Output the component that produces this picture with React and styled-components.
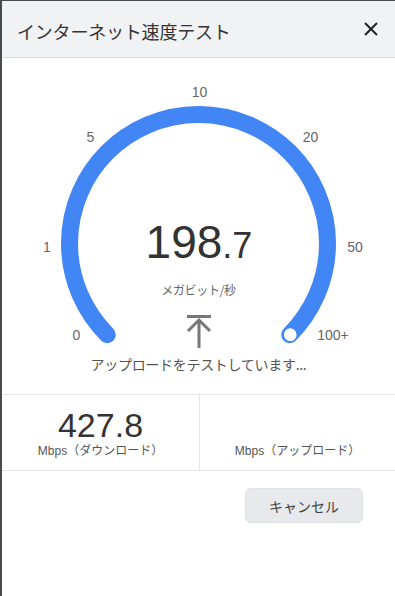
import React from "react";
import styled, { createGlobalStyle } from "styled-components";

const Global = createGlobalStyle`
  html, body { margin: 0; padding: 0; background: #fff; }
  body { font-family: "Liberation Sans", "Noto Sans CJK JP", sans-serif; }
  * { box-sizing: border-box; }
`;

const Dialog = styled.div`
  width: 395px;
  height: 596px;
  border-left: 2px solid #4a4a4a;
  border-top: 1px solid #4a4a4a;
  background: #fff;
  display: flex;
  flex-direction: column;
  overflow: hidden;
`;

const Header = styled.div`
  height: 57px;
  flex: none;
  background: #f1f2f4;
  border-bottom: 1px solid #dcdcdc;
  display: flex;
  align-items: center;
  justify-content: space-between;
  padding: 4px 16px 0 15px;
`;

const Title = styled.div`
  font-family: "Noto Sans CJK JP", sans-serif;
  font-size: 18px;
  color: #333;
  letter-spacing: -0.2px;
`;

const Close = styled.button`
  border: none;
  background: none;
  padding: 0;
  width: 16px;
  height: 16px;
  display: flex;
  align-items: center;
  justify-content: center;
  margin-top: -4px;
`;

const Gauge = styled.div`
  position: relative;
  display: flex;
  flex-direction: column;
  align-items: center;
  padding: 161px 0 21px;
`;

const Dial = styled.svg`
  position: absolute;
  left: 0;
  top: 0;
  width: 393px;
  height: 300px;
`;

const Reading = styled.div`
  position: relative;
  font-family: "Liberation Sans", sans-serif;
  color: #333;
  line-height: 46px;
  height: 46px;
  margin-left: 1px;
`;

const Whole = styled.span`
  font-size: 46px;
`;

const Fraction = styled.span`
  font-size: 36px;
`;

const Unit = styled.div`
  position: relative;
  margin-top: 17px;
  font-family: "Noto Sans CJK JP", sans-serif;
  font-size: 12px;
  line-height: 16px;
  color: #666;
  letter-spacing: -0.3px;
`;

const Arrow = styled.svg`
  position: relative;
  margin-top: 15px;
  width: 28px;
  height: 36px;
`;

const Status = styled.div`
  position: relative;
  margin-top: 6px;
  font-family: "Noto Sans CJK JP", sans-serif;
  font-size: 14px;
  line-height: 18px;
  color: #555;
  letter-spacing: -0.3px;
`;

const Stats = styled.div`
  display: grid;
  grid-template-columns: 197px 1fr;
  border-top: 1px solid #e4e4e4;
  border-bottom: 1px solid #e4e4e4;
  height: 77px;
`;

const Cell = styled.div`
  display: flex;
  flex-direction: column;
  align-items: center;
  justify-content: flex-end;
  padding-bottom: 11px;
  border-left: ${(p) => (p.$divided ? "1px solid #e4e4e4" : "none")};
`;

const Value = styled.div`
  font-family: "Liberation Sans", sans-serif;
  font-size: 34px;
  line-height: 34px;
  color: #333;
`;

const Label = styled.div`
  font-family: "Liberation Sans", "Noto Sans CJK JP", sans-serif;
  font-size: 12px;
  line-height: 16px;
  color: #555;
  margin-top: 1px;
`;

const Footer = styled.div`
  display: flex;
  justify-content: flex-end;
  padding: 17px 32px 0 0;
`;

const Button = styled.button`
  width: 118px;
  height: 35px;
  border: 1px solid #e0e1e4;
  border-radius: 6px;
  background: #e8e9ec;
  font-family: "Noto Sans CJK JP", sans-serif;
  font-size: 14px;
  color: #444;
  padding: 0;
`;

const BLUE = "#4285f4";
const cx = 198.5;
const cy = 243.5;
const r = 129;
const d = r * Math.SQRT1_2;

const ticks = [
  { t: "0", x: 76.5, y: 340 },
  { t: "1", x: 47, y: 252 },
  { t: "5", x: 90.5, y: 142 },
  { t: "10", x: 199.5, y: 97 },
  { t: "20", x: 310.5, y: 142 },
  { t: "50", x: 355, y: 252 },
  { t: "100+", x: 333, y: 340 },
];

export default function App() {
  return (
    <>
      <Global />
      <Dialog>
        <Header>
          <Title>インターネット速度テスト</Title>
          <Close aria-label="close">
            <svg width="14" height="14" viewBox="0 0 14 14">
              <path d="M1 1L13 13M13 1L1 13" stroke="#222" strokeWidth="2" />
            </svg>
          </Close>
        </Header>
        <Gauge>
          <Dial viewBox="2 58 393 300">
            <path
              d={`M ${cx - d} ${cy + d} A ${r} ${r} 0 1 1 ${cx + d} ${cy + d}`}
              fill="none"
              stroke={BLUE}
              strokeWidth="17"
              strokeLinecap="round"
            />
            <circle cx={cx + d + 0.5} cy={cy + d} r="7" fill="#fff" stroke={BLUE} strokeWidth="1.2" />
            {ticks.map((k) => (
              <text
                key={k.t}
                x={k.x}
                y={k.y}
                textAnchor="middle"
                fontFamily="Liberation Sans, sans-serif"
                fontSize="14"
                fill="#666"
              >
                {k.t}
              </text>
            ))}
          </Dial>
          <Reading>
            <Whole>198</Whole>
            <Fraction>.7</Fraction>
          </Reading>
          <Unit>メガビット/秒</Unit>
          <Arrow viewBox="0 0 28 36">
            <path d="M2 3.5H26M14 7V35M3 18L14 7L25 18" fill="none" stroke="#777" strokeWidth="3" />
          </Arrow>
          <Status>アップロードをテストしています...</Status>
        </Gauge>
        <Stats>
          <Cell>
            <Value>427.8</Value>
            <Label>Mbps（ダウンロード）</Label>
          </Cell>
          <Cell $divided>
            <Label>Mbps（アップロード）</Label>
          </Cell>
        </Stats>
        <Footer>
          <Button>キャンセル</Button>
        </Footer>
      </Dialog>
    </>
  );
}
